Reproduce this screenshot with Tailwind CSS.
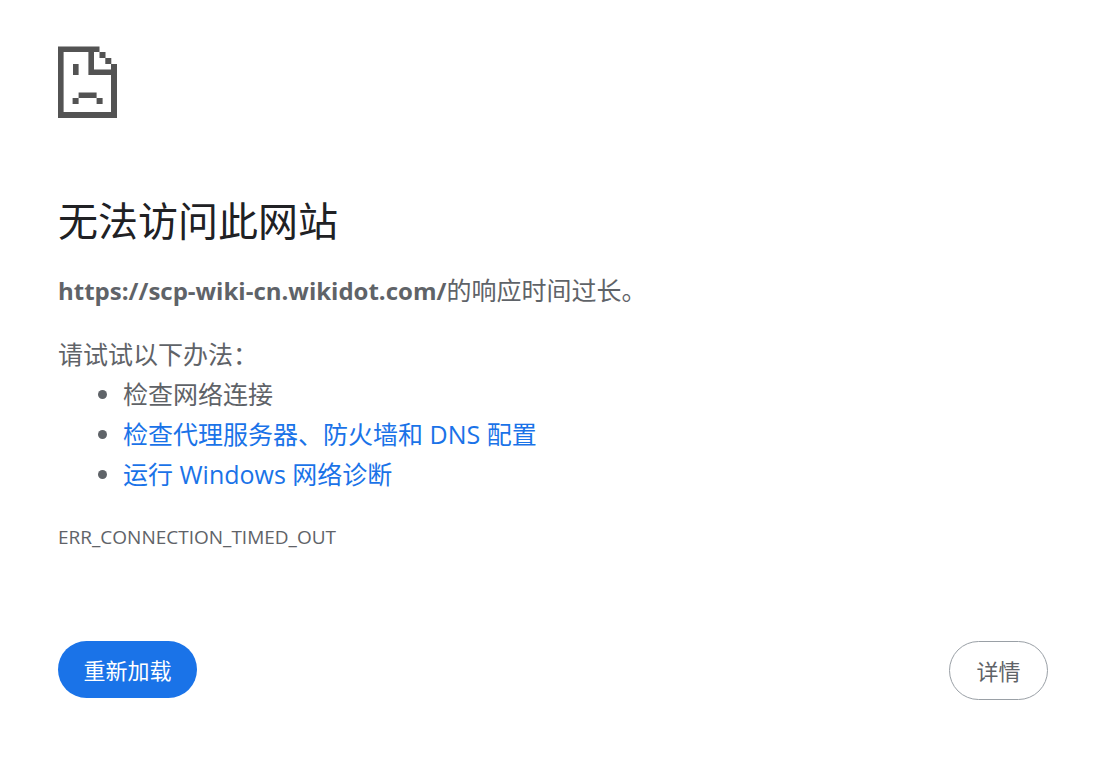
<!DOCTYPE html>
<html lang="zh-CN">
<head>
  <meta charset="utf-8">
  <meta name="viewport" content="width=device-width, initial-scale=1">
  <title>scp-wiki-cn.wikidot.com</title>
  <script src="https://cdn.jsdelivr.net/npm/@tailwindcss/browser@4"></script>
</head>
<body class="bg-white font-['Open_Sans','Noto_Sans_CJK_SC',sans-serif] text-[#5f6368]">
  <main class="pl-[58px] pr-[51px] pt-[46px] pb-16">
    <!-- Sad page icon -->
    <svg class="h-[72px] w-[59px] text-[#535353]" viewBox="0 0 59 72" fill="currentColor" aria-hidden="true">
      <path fill-rule="evenodd" d="M0 .6H41.5V6H36V23.5H53V18H59V72H0zM5.6 6V66H53V29H30.4V6z"/>
      <path d="M41.5 6h6v6h-6zM47.3 12h6v6h-6zM15 18h5.6v11H15zM20.6 46.5h18V52h-18zM14.6 52h6v6h-6zM38.6 52h6v6h-6z"/>
    </svg>

    <h1 class="mt-[77px] text-[40px] leading-[52px] text-[#202124]">无法访问此网站</h1>

    <p class="mt-6 text-[25px] leading-[39px]"><strong class="text-[24px] font-bold">https://scp-wiki-cn.wikidot.com/</strong>的响应时间过长。</p>

    <div class="mt-6 text-[25px] leading-[40px]">
      <p>请试试以下办法：</p>
      <ul class="list-disc pl-[65px]">
        <li>检查网络连接</li>
        <li><a href="#" class="text-[#1a73e8]">检查代理服务器、防火墙和 DNS 配置</a></li>
        <li><a href="#" class="text-[#1a73e8]">运行 Windows 网络诊断</a></li>
      </ul>
    </div>

    <div class="mt-7 text-[19px] leading-[30px]">ERR_CONNECTION_TIMED_OUT</div>

    <div class="mt-[89px] flex items-start justify-between text-[22px] leading-[32px]">
      <button type="button" class="h-[57px] w-[139px] rounded-full bg-[#1a73e8] text-white">重新加载</button>
      <button type="button" class="h-[59px] w-[99px] rounded-full border border-[#9aa0a6]">详情</button>
    </div>
  </main>
</body>
</html>
